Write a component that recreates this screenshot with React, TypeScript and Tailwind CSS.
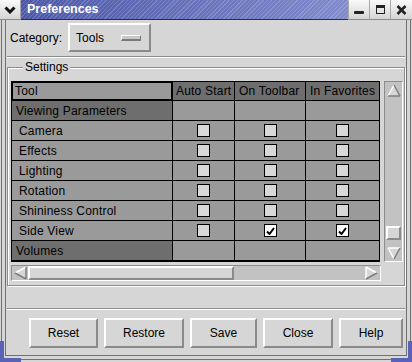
import React from "react"

type Row = { label: string; group?: boolean; vals?: boolean[] }

const rows: Row[] = [
  { label: "Viewing Parameters", group: true },
  { label: "Camera", vals: [false, false, false] },
  { label: "Effects", vals: [false, false, false] },
  { label: "Lighting", vals: [false, false, false] },
  { label: "Rotation", vals: [false, false, false] },
  { label: "Shininess Control", vals: [false, false, false] },
  { label: "Side View", vals: [false, true, true] },
  { label: "Volumes", group: true },
]

const buttons = [
  { label: "Reset", w: "w-[69px]" },
  { label: "Restore", w: "w-[80px]" },
  { label: "Save", w: "w-[67px]" },
  { label: "Close", w: "w-[70px]" },
  { label: "Help", w: "w-[64px]" },
]

// gtk1-ish bevelled triangle
function Arrow({ dir }: { dir: "up" | "down" | "left" | "right" }) {
  const light = "#ffffff"
  const dark = "#7e7e7e"
  if (dir === "up")
    return (
      <svg width="14" height="13" viewBox="0 0 14 13">
        <polygon points="7,1 13,12 1,12" fill="#d6d6d6" />
        <line x1="1" y1="12" x2="7" y2="1" stroke={light} strokeWidth="1.5" />
        <line x1="7" y1="1" x2="13" y2="12" stroke={dark} strokeWidth="1.5" />
        <line x1="1" y1="12" x2="13" y2="12" stroke={dark} strokeWidth="1.5" />
      </svg>
    )
  if (dir === "down")
    return (
      <svg width="14" height="13" viewBox="0 0 14 13">
        <polygon points="1,1 13,1 7,12" fill="#d6d6d6" />
        <line x1="1" y1="1" x2="13" y2="1" stroke={light} strokeWidth="1.5" />
        <line x1="1" y1="1" x2="7" y2="12" stroke={light} strokeWidth="1.5" />
        <line x1="13" y1="1" x2="7" y2="12" stroke={dark} strokeWidth="1.5" />
      </svg>
    )
  if (dir === "left")
    return (
      <svg width="13" height="14" viewBox="0 0 13 14">
        <polygon points="1,7 12,1 12,13" fill="#d6d6d6" />
        <line x1="1" y1="7" x2="12" y2="1" stroke={light} strokeWidth="1.5" />
        <line x1="1" y1="7" x2="12" y2="13" stroke={dark} strokeWidth="1.5" />
        <line x1="12" y1="1" x2="12" y2="13" stroke={dark} strokeWidth="1.5" />
      </svg>
    )
  return (
    <svg width="13" height="14" viewBox="0 0 13 14">
      <polygon points="1,1 12,7 1,13" fill="#d6d6d6" />
      <line x1="1" y1="1" x2="1" y2="13" stroke={light} strokeWidth="1.5" />
      <line x1="1" y1="1" x2="12" y2="7" stroke={light} strokeWidth="1.5" />
      <line x1="1" y1="13" x2="12" y2="7" stroke={dark} strokeWidth="1.5" />
    </svg>
  )
}

function Check({ on }: { on: boolean }) {
  return (
    <div
      className={`w-[13px] h-[13px] border border-black flex items-center justify-center ${
        on ? "bg-white" : "bg-[#d9d9d9]"
      }`}
    >
      {on && (
        <svg width="9" height="8" viewBox="0 0 9 8">
          <path d="M1 4.5 L3.5 7 L8 1" fill="none" stroke="#000" strokeWidth="2" />
        </svg>
      )}
    </div>
  )
}

function TitleBar() {
  const btn =
    "h-[20px] flex items-center justify-center bg-gradient-to-b from-[#fafafa] to-[#d4d4d4] border-l border-[#a8a8a8] border-b border-b-[#8a8a8a]"
  return (
    <div className="h-[20px] flex shrink-0">
      <div className="w-[21px] h-[20px] flex items-center justify-center bg-gradient-to-b from-[#fafafa] to-[#d4d4d4] border-r border-[#a8a8a8] border-b border-b-[#8a8a8a]">
        <svg width="12" height="8" viewBox="0 0 12 8">
          <polyline points="1.5,1.5 6,6 10.5,1.5" fill="none" stroke="#111" strokeWidth="3" />
        </svg>
      </div>
      <div className="flex-1 h-[20px] flex items-center pl-[6px] border-b border-[#232a66] bg-[repeating-linear-gradient(135deg,rgba(255,255,255,0.16)_0px,rgba(255,255,255,0.16)_1px,transparent_1px,transparent_3px),linear-gradient(to_right,#4c57a8,#808acc)]">
        <span className="text-white font-bold text-[12.5px] leading-none">Preferences</span>
      </div>
      <div className={`w-[21px] ${btn}`}>
        <div className="w-[10px] h-[3px] bg-[#222] rounded-[1px] mt-[6px]" />
      </div>
      <div className={`w-[21px] ${btn}`}>
        <div className="w-[9px] h-[9px] border border-[#222] border-t-[3px]" />
      </div>
      <div className={`w-[22px] ${btn}`}>
        <svg width="11" height="10" viewBox="0 0 11 10">
          <path d="M1.5 1 L9.5 9 M9.5 1 L1.5 9" stroke="#222" strokeWidth="2.6" />
        </svg>
      </div>
    </div>
  )
}

export default function App() {
  const raised =
    "bg-[#d6d6d6] border-2 border-t-white border-l-white border-b-[#8a8a8a] border-r-[#8a8a8a]"
  const trough =
    "bg-[#c2c2c2] border border-t-[#8c8c8c] border-l-[#8c8c8c] border-b-white border-r-white"

  return (
    <div className="relative w-[412px] h-[362px] bg-[#d6d6d6] flex flex-col font-['Liberation_Sans',Arial,sans-serif] text-[12px] text-black overflow-hidden">
      <TitleBar />

      <div className="flex-1 flex flex-col px-[1px] pb-[2px]">
        <div className="flex-1 flex flex-col border-x border-b border-[#707070] px-[3px] pb-[3px]">
          <div className="flex-1 flex flex-col border-x border-b border-[#707070]">
            {/* category */}
            <div className="flex items-center gap-[6px] pt-[3px] pl-[4px]">
              <span className="leading-[14px]">Category:</span>
              <div className={`w-[83px] h-[29px] flex items-center justify-between pl-[6px] pr-[8px] ${raised}`}>
                <span>Tools</span>
                <div className="w-[20px] h-[6px] bg-[#c8c8c8] border-t border-l border-white border-b-2 border-r border-b-[#7a7a7a] border-r-[#7a7a7a]" />
              </div>
            </div>

            <div className="mt-[4px] mx-[1px] h-[2px] border-t border-[#8c8c8c] border-b border-b-white" />

            {/* settings frame */}
            <fieldset className="mt-[2px] mx-[1px] border border-[#8c8c8c] shadow-[inset_1px_1px_0_#fff,1px_1px_0_#fff] pl-[3px] pt-[7px] pb-[4px]">
              <legend className="ml-[12px] px-[2px] leading-[14px] bg-[#d6d6d6]">Settings</legend>

              <div className="grid grid-cols-[370px_19px] grid-rows-[181px_16px] gap-[3px]">
                {/* table */}
                <div className="w-[369px] grid grid-cols-[160px_61px_70px_73px] grid-rows-[18px_repeat(8,19px)] gap-px bg-black border border-black leading-[14px] tracking-[0.2px]">
                  <div className="bg-[#9a9a9a] shadow-[inset_0_0_0_1px_#000] flex items-center pl-[3px]">Tool</div>
                  <div className="bg-[#6e6e6e] flex items-center pl-[3px] whitespace-nowrap">Auto Start</div>
                  <div className="bg-[#6e6e6e] flex items-center pl-[4px] whitespace-nowrap">On Toolbar</div>
                  <div className="bg-[#6e6e6e] flex items-center pl-[4px] whitespace-nowrap">In Favorites</div>

                  {rows.map((r) => (
                    <React.Fragment key={r.label}>
                      <div
                        className={`flex items-center whitespace-nowrap ${
                          r.group ? "bg-[#6e6e6e] pl-[4px]" : "bg-[#9a9a9a] pl-[7px]"
                        }`}
                      >
                        {r.label}
                      </div>
                      {[0, 1, 2].map((i) => (
                        <div key={i} className="bg-[#9a9a9a] flex items-center justify-center">
                          {r.vals && <Check on={r.vals[i]} />}
                        </div>
                      ))}
                    </React.Fragment>
                  ))}
                </div>

                {/* vertical scrollbar */}
                <div className={`flex flex-col items-center ${trough}`}>
                  <div className="h-[16px] flex items-center justify-center">
                    <Arrow dir="up" />
                  </div>
                  <div className="flex-1" />
                  <div className={`w-[15px] h-[14px] ${raised}`} />
                  <div className="h-[5px]" />
                  <div className="h-[16px] flex items-center justify-center">
                    <Arrow dir="down" />
                  </div>
                </div>

                {/* horizontal scrollbar */}
                <div className={`flex items-center ${trough}`}>
                  <div className="w-[16px] flex items-center justify-center">
                    <Arrow dir="left" />
                  </div>
                  <div className={`w-[206px] h-[14px] ${raised}`} />
                  <div className="flex-1" />
                  <div className="w-[17px] flex items-center justify-center">
                    <Arrow dir="right" />
                  </div>
                </div>
                <div />
              </div>
            </fieldset>

            <div className="mt-[22px] mx-[1px] h-[2px] border-t border-[#8c8c8c] border-b border-b-white" />

            {/* buttons */}
            <div className="flex gap-[6px] pl-[23px] mt-[8px]">
              {buttons.map((b) => (
                <div key={b.label} className={`${b.w} h-[30px] flex items-center justify-center ${raised}`}>
                  {b.label}
                </div>
              ))}
            </div>
          </div>
        </div>
      </div>

      {/* window-manager resize corners */}
      <div className="absolute left-0 bottom-0 w-[21px] h-[21px] border-l-[4px] border-b-[4px] border-[#5962b4]" />
      <div className="absolute right-0 bottom-0 w-[21px] h-[21px] border-r-[4px] border-b-[4px] border-[#5962b4]" />
    </div>
  )
}
